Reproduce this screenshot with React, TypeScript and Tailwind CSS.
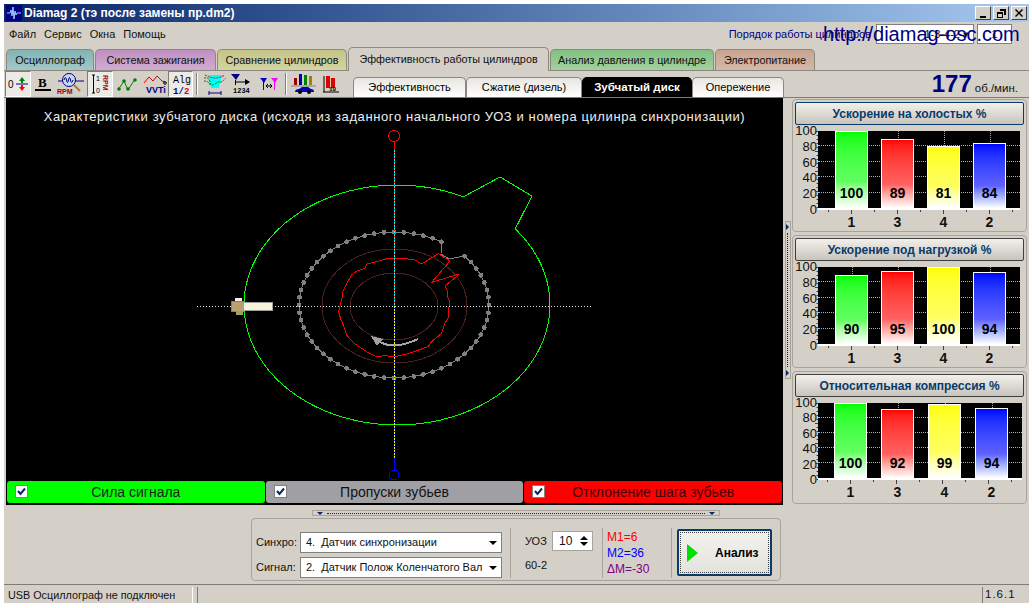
const rawRed = [
  [605, 312], [640, 290], [655, 281], [690, 303], [635, 367], [718, 342], [675, 378], [682, 392], [682, 410],
  [690, 425], [686, 445], [686, 470], [675, 490], [665, 520], [635, 545], [625, 560], [590, 572], [560, 582],
  [525, 590], [495, 587], [470, 590], [445, 578], [425, 565], [400, 548], [380, 525], [372, 500], [363, 480],
  [356, 455], [362, 430], [368, 405], [368, 395], [380, 370], [395, 345], [410, 333], [435, 325], [440, 312],
  [470, 305], [500, 296], [550, 295], [585, 300], [605, 312],
];
const redLine = rawRed.map(([x, y]) => `${220 + x / 3},${160 + y / 3}`).join(" ");

const teeth = Array.from({ length: 58 }, (_, i) => {
  const t = ((-42 + i * 6) * Math.PI) / 180;
  return [394 + 95 * Math.cos(t), 305 + 73 * Math.sin(t)];
});
const teethLine = teeth.map(([x, y]) => `${x},${y}`).join(" ");

// disc outline, runs clockwise from the notch
const discLine = Array.from({ length: 84 }, (_, i) => {
  const t = ((-39.4 + (i * 335.1) / 83) * Math.PI) / 180;
  return `${397 + 153 * Math.cos(t)},${305 + 120 * Math.sin(t)}`;
}).join(" ");

const Disc = () => (
  <svg viewBox="7 98 775 383" className="absolute inset-0 h-full w-full" shapeRendering="crispEdges">
    <polygon points={`${discLine} 500,177 532,196`} fill="none" stroke="#00ff00" strokeWidth="1" />
    <ellipse cx="394.5" cy="306" rx="72.5" ry="57" fill="none" stroke="#4a2020" />
    <ellipse cx="394" cy="306.5" rx="44" ry="33.5" fill="none" stroke="#4a2020" />
    <polyline points={`${teethLine} 441,254 449,259 464,256`} fill="none" stroke="#808080" strokeWidth="1" />
    {teeth.map(([x, y], i) => (
      <circle key={i} cx={x} cy={y} r="2.4" fill="#808080" />
    ))}
    <polyline points={redLine} fill="none" stroke="#ff0000" strokeWidth="1" />
    <line x1="197" y1="306.5" x2="592" y2="306.5" stroke="#e8e8e8" strokeDasharray="1 2" />
    <circle cx="394" cy="136" r="5.5" fill="none" stroke="#ff0000" />
    <line x1="394.5" y1="141" x2="394.5" y2="150" stroke="#ff0000" />
    <line x1="394.5" y1="150" x2="394.5" y2="306" stroke="#ff0000" />
    <line x1="394.5" y1="150" x2="394.5" y2="306" stroke="#00ffff" strokeDasharray="2 1" />
    <line x1="394.5" y1="306" x2="394.5" y2="459" stroke="#0000ff" />
    <line x1="394.5" y1="306" x2="394.5" y2="459" stroke="#ffff00" strokeDasharray="2 1" />
    <line x1="394.5" y1="459" x2="394.5" y2="470" stroke="#0000ff" />
    <circle cx="394" cy="475" r="5" fill="none" stroke="#0000ff" />
    <path d="M418 339 Q395 350 380 342" fill="none" stroke="#a8a8a8" strokeWidth="2" />
    <polygon points="371,336 383,339 377,346" fill="#a0a0a0" />
    <rect x="235" y="298" width="7" height="3" fill="#f0f0f0" />
    <rect x="231" y="301" width="12" height="10" fill="#b8a070" stroke="#808080" />
    <rect x="236" y="311" width="7" height="4" fill="#a89868" />
    <rect x="243" y="302.5" width="29" height="8" fill="#f8f4dc" stroke="#a0a0a0" />
  </svg>
);

const topTabs = [
  { label: "Осциллограф", cls: "w-[88px] bg-gradient-to-b from-[#80b4b4] to-[#a4c8c8]" },
  { label: "Система зажигания", cls: "w-[121px] bg-gradient-to-b from-[#c090c0] to-[#d0acd0]" },
  { label: "Сравнение цилиндров", cls: "w-[130px] bg-gradient-to-b from-[#c4c488] to-[#d4d4a4]" },
];
const topTabs2 = [
  { label: "Анализ давления в цилиндре", cls: "w-[164px] bg-gradient-to-b from-[#80c080] to-[#a4d0a0]" },
  { label: "Электропитание", cls: "w-[100px] bg-gradient-to-b from-[#c8a490] to-[#d4b8a8]" },
];

const Tab = ({ label, cls }: { label: string; cls: string }) => (
  <div className={`flex h-[21px] items-center justify-center rounded-t-[5px] border border-b-0 border-[#8c8880] text-[10.8px] text-[#111] ${cls}`}>
    {label}
  </div>
);

const SubTab = ({ label, cls, on }: { label: string; cls: string; on?: boolean }) => (
  <div
    className={`flex h-[20px] items-center justify-center rounded-t-[5px] border border-b-0 ${cls} ${
      on ? "border-black bg-black text-[11.5px] font-bold text-white" : "border-[#8c8880] bg-gradient-to-b from-[#e8e6e0] to-white text-[11px] text-black"
    }`}
  >
    {label}
  </div>
);

const ToolBtn = ({ children, w, on }: { children: React.ReactNode; w: string; on?: boolean }) => (
  <div
    className={`flex h-[26px] items-center justify-center ${w} ${
      on ? "border border-t-[#807c74] border-l-[#807c74] border-r-white border-b-white bg-[#eceae6]" : ""
    }`}
  >
    {children}
  </div>
);

const Toolbar = () => (
  <div className="flex w-[349px] items-center pl-[1px]">
    <ToolBtn w="w-[26px]" on>
      <svg width="22" height="18" viewBox="0 0 22 18">
        <text x="1" y="13" fontSize="10" fontFamily="Liberation Sans" fill="#000">0</text>
        <path d="M9 9h12" stroke="#000080" />
        <path d="M15 2l3 4h-2v2h-2v-2h-2z" fill="#008000" />
        <path d="M15 16l3-4h-2v-2h-2v2h-2z" fill="#ff0000" />
      </svg>
    </ToolBtn>
    <ToolBtn w="w-[24px]">
      <svg width="18" height="18" viewBox="0 0 18 18">
        <text x="4" y="12" fontSize="13" fontWeight="bold" fontFamily="Liberation Serif" fill="#000">B</text>
        <rect x="1" y="14" width="16" height="2" fill="#000" />
      </svg>
    </ToolBtn>
    <ToolBtn w="w-[32px]">
      <svg width="28" height="24" viewBox="0 0 28 24">
        <path d="M1 9h26" stroke="#000080" />
        <circle cx="12" cy="8" r="6.5" fill="#c8d8f0" stroke="#000080" />
        <path d="M7 8q1.500-5 2.500 0t2 0 2 0 2.500 0" fill="none" stroke="#000080" />
        <path d="M17 13l6 6" stroke="#a08040" strokeWidth="2" />
        <text x="0" y="22" fontSize="7" fontWeight="bold" fontFamily="Liberation Sans" fill="#a00000">RPM</text>
      </svg>
    </ToolBtn>
    <ToolBtn w="w-[26px]" on>
      <svg width="22" height="22" viewBox="0 0 22 22">
        <path d="M3 2h3M4.500 2v18M3 20h3" stroke="#000" fill="none" />
        <text x="7" y="8" fontSize="7" fontFamily="Liberation Sans" fill="#000">1</text>
        <text x="7" y="20" fontSize="7" fontFamily="Liberation Sans" fill="#000">0</text>
        <text x="0" y="0" fontSize="7" fontWeight="bold" fontFamily="Liberation Sans" fill="#a00000" transform="translate(14 2) rotate(90)">RPM</text>
      </svg>
    </ToolBtn>
    <ToolBtn w="w-[28px]">
      <svg width="22" height="18" viewBox="0 0 22 18">
        <path d="M2 15L8 6l4 9 7-11" fill="none" stroke="#008000" />
        <circle cx="3" cy="14" r="1.800" fill="#008000" />
        <circle cx="8" cy="6" r="1.800" fill="#008000" />
        <circle cx="12" cy="14" r="1.800" fill="#008000" />
        <circle cx="19" cy="5" r="1.800" fill="#008000" />
      </svg>
    </ToolBtn>
    <ToolBtn w="w-[27px]">
      <svg width="24" height="22" viewBox="0 0 24 22">
        <path d="M1 10L6 4l4 4 4-5 5 5 3 1" fill="none" stroke="#e00000" />
        <circle cx="22" cy="10" r="1.300" fill="none" stroke="#000" />
        <text x="3" y="20" fontSize="9" fontWeight="bold" fontFamily="Liberation Sans" fill="#000080">VVTi</text>
      </svg>
    </ToolBtn>
    <ToolBtn w="w-[25px]" on>
      <svg width="20" height="24" viewBox="0 0 20 24">
        <text x="2" y="11" fontSize="10" fontFamily="Liberation Mono" fill="#000">Alg</text>
        <text x="2" y="22" fontSize="9" fontWeight="bold" fontFamily="Liberation Mono" fill="#000080">1/</text>
        <text x="13" y="22" fontSize="9" fontWeight="bold" fontFamily="Liberation Mono" fill="#e00000">2</text>
      </svg>
    </ToolBtn>
    <div className="mx-[3px] h-[22px] w-[2px] border-x border-l-[#807c74] border-r-white" />
    <ToolBtn w="w-[27px]">
      <svg width="24" height="24" viewBox="0 0 24 24">
        <path d="M5 3h14l-3 13H8z" fill="#00ffff" />
        <path d="M1 6q5-1 6 4t5 2 5-2 6-4M1 9q5 0 6 4" fill="none" stroke="#008000" strokeDasharray="2 1" />
        <path d="M2 3q5 3 10 3t10-3" fill="none" stroke="#e00000" strokeDasharray="2 1" />
        <path d="M6 21h12M6 19v4M18 19v4" stroke="#000080" />
      </svg>
    </ToolBtn>
    <ToolBtn w="w-[28px]">
      <svg width="24" height="24" viewBox="0 0 24 24">
        <path d="M1 2h9l-4 6z" fill="#000080" />
        <path d="M5.500 8v5M5 10h14" stroke="#000" />
        <path d="M15 7l5 3-5 3z" fill="#000" />
        <text x="3" y="21" fontSize="7" fontWeight="bold" fontFamily="Liberation Mono" fill="#000">1234</text>
      </svg>
    </ToolBtn>
    <ToolBtn w="w-[26px]">
      <svg width="20" height="18" viewBox="0 0 20 18">
        <path d="M1 3h7l-3 5z" fill="#0000c0" />
        <path d="M4.500 6v9" stroke="#0000c0" />
        <path d="M12 3h7l-3 5z" fill="#ff00ff" />
        <path d="M15.500 6v9" stroke="#ff00ff" />
        <path d="M7 11h6M7 11l2-2M7 11l2 2M13 11l-2-2M13 11l-2 2" stroke="#000" fill="none" />
      </svg>
    </ToolBtn>
    <div className="mx-[3px] h-[22px] w-[2px] border-x border-l-[#807c74] border-r-white" />
    <ToolBtn w="w-[28px]">
      <svg width="26" height="22" viewBox="0 0 26 22">
        <rect x="3" y="5" width="3" height="7" fill="#a00000" />
        <rect x="8" y="1" width="3" height="11" fill="#0000a0" />
        <rect x="13" y="2" width="3" height="10" fill="#008000" />
        <rect x="18" y="3" width="3" height="9" fill="#a08000" />
        <path d="M0 13h25" stroke="#808080" />
        <path d="M4 19q0-3 4-3l3-2h6l3 2q3 0 3 3z" fill="#0000c0" />
        <circle cx="9" cy="19" r="2" fill="#000" />
        <circle cx="18" cy="19" r="2" fill="#000" />
      </svg>
    </ToolBtn>
    <ToolBtn w="w-[26px]">
      <svg width="18" height="20" viewBox="0 0 18 20">
        <path d="M2 2v16M1 18h16" stroke="#000" />
        <rect x="4" y="2" width="4" height="12" fill="#e00000" />
        <rect x="9" y="4" width="4" height="10" fill="#e00000" />
        <text x="7" y="17" fontSize="6" fontWeight="bold" fontFamily="Liberation Mono" fill="#000">10</text>
      </svg>
    </ToolBtn>
  </div>
);

const Check = () => (
  <span className="flex h-[13px] w-[13px] items-center justify-center border border-[#808080] bg-white">
    <svg width="9" height="9" viewBox="0 0 9 9">
      <path d="M1 4l2.500 3L8 1.500" fill="none" stroke="#0a246a" strokeWidth="2" />
    </svg>
  </span>
);

const CheckBar = ({ label, cls }: { label: string; cls: string }) => (
  <div className={`relative flex h-[22px] flex-1 items-center justify-center rounded-[3px] text-[14px] ${cls}`}>
    <span className="absolute left-[8px] top-[4px]">
      <Check />
    </span>
    {label}
  </div>
);

const colors = [
  "from-[#00ff00] via-[#60ff60] via-65% to-white",
  "from-[#ff0000] via-[#ff6060] via-65% to-white",
  "from-[#ffff00] via-[#ffff60] via-65% to-white",
  "from-[#0000ff] via-[#6060ff] via-65% to-white",
];

const Chart = ({ vals, axis, wrap, h, lh, ticks }: { vals: number[]; axis: string; wrap: string; h: string; lh: string; ticks: number }) => (
  <div className="mt-[6px] flex">
    <div className={`flex w-[22px] flex-col justify-between text-right text-[13px] leading-[14px] text-[#111] -my-[7px] ${lh}`}>
      {[100, 80, 60, 40, 20, 0].map((n) => (
        <span key={n}>{n}</span>
      ))}
    </div>
    <div className={`relative ml-[1px] flex flex-col ${axis}`}>
      <svg className="absolute -left-[3px] top-0" width="3" height="78">
        {Array.from({ length: 20 }, (_, i) => (
          <path key={i} d={`M${i % 5 === 0 ? 0 : 1.5} ${i * 4 + 0.5}H3`} stroke="#404040" />
        ))}
      </svg>
      <div className={`relative flex items-end border-b-2 border-white bg-black ${wrap} ${h}`}>
        {[20, 40, 60, 80].map((n) => (
          <div key={n} className="absolute inset-x-0 border-t border-dotted border-[#b0b0b0]" style={{ bottom: `${n}%` }} />
        ))}
        {vals.map((v, i) => (
          <div key={i} className="relative flex h-full w-[33px] items-end">
            <div className="absolute inset-y-0 left-1/2 border-l border-dotted border-[#b0b0b0]" />
            <div className={`relative w-full border border-b-0 border-white bg-gradient-to-b ${colors[i]}`} style={{ height: `${v}%` }}>
              <span className="absolute bottom-[8px] left-0 right-0 text-center text-[14px] font-bold leading-[14px] text-black">{v}</span>
            </div>
          </div>
        ))}
      </div>
      <svg className="block" width="204" height="4">
        {Array.from({ length: 9 }, (_, i) => (
          <path key={i} d={`M${ticks + i * 23 + 0.5} 0v${i % 2 ? 4 : 2}`} stroke="#404040" />
        ))}
      </svg>
      <div className={`flex ${wrap}`}>
        {["1", "3", "4", "2"].map((n) => (
          <span key={n} className="w-[33px] text-center text-[14px] font-bold leading-[16px] text-[#111]">
            {n}
          </span>
        ))}
      </div>
    </div>
  </div>
);

const Panel = ({
  title,
  focus,
  vals,
  axis,
  wrap,
  h,
  lh,
  ticks,
}: {
  title: string;
  focus?: boolean;
  vals: number[];
  axis: string;
  wrap: string;
  h: string;
  lh: string;
  ticks: number;
}) => (
  <div className="h-[133px] rounded-[4px] border border-[#a8a49c] px-[2px] pt-[2px]">
    <div
      className={`flex h-[23px] items-center justify-center rounded-[2px] border bg-gradient-to-b from-[#f2f0ec] to-[#c8c4bc] text-[12px] font-bold text-[#0a3a6a] ${
        focus ? "border-[#0a3a6a]" : "border-[#404040]"
      }`}
    >
      {title}
    </div>
    <Chart vals={vals} axis={axis} wrap={wrap} h={h} lh={lh} ticks={ticks} />
  </div>
);

export default function App() {
  return (
    <div className="h-[608px] w-[1032px] overflow-hidden bg-white pl-[4px] pr-[3px] pt-[4px] pb-[5px] font-['Liberation_Sans',sans-serif] text-[#111]">
      <div className="relative flex h-full flex-col bg-[#d4d0c8]">
        {/* title */}
        <div className="flex h-[18px] items-center bg-gradient-to-r from-[#0a246a] to-[#a6caf0] pl-[2px] pr-[2px]">
          <svg width="16" height="16" viewBox="0 0 16 16">
            <rect width="16" height="16" fill="#000080" />
            <path d="M1 8h3l1-3 1 6 1-9 1 12 1-8 1 4 1-2h4" fill="none" stroke="#a0d0ff" />
          </svg>
          <span className="ml-[2px] text-[12px] font-bold text-white">Diamag 2 (тэ после замены пр.dm2)</span>
          <div className="ml-auto flex gap-[2px]">
            {["M3 9h6v2H3z", "M5 2h6v6H9V4H5zM2 5h6v6H2zM3 7v3h4V7z", "M3 2l3 3 3-3 1 1-3 3 3 3-1 1-3-3-3 3-1-1 3-3-3-3z"].map((d) => (
              <span
                key={d}
                className="flex h-[14px] w-[16px] items-center justify-center border border-b-[#404040] border-l-white border-r-[#404040] border-t-white bg-[#d4d0c8]"
              >
                <svg width="12" height="12" viewBox="0 0 12 12">
                  <path d={d} fill="#000" fillRule="evenodd" />
                </svg>
              </span>
            ))}
          </div>
        </div>
        {/* menu */}
        <div className="flex h-[24px] items-center gap-[8px] pl-[5px] text-[11px]">
          <span>Файл</span>
          <span>Сервис</span>
          <span>Окна</span>
          <span>Помощь</span>
          <div className="ml-auto flex items-center pr-[17px]">
            <span className="mr-[5px] text-[#000080]">Порядок работы цилиндров</span>
            <span className="flex h-[20px] w-[98px] items-center justify-end border border-[#808080] bg-white pr-[4px]">1-3-4-2 ▾</span>
            <span className="ml-[3px] flex h-[20px] w-[35px] items-center justify-center border border-[#808080] bg-white">1</span>
          </div>
        </div>
        <div className="pointer-events-none absolute left-[819px] top-[17px] whitespace-nowrap text-[20px] leading-[26px] text-[#000080]">http://diamag-osc.com</div>
        {/* top tabs */}
        <div className="flex h-[25px] items-end gap-[1px] border-b border-[#8c8880] pl-[2px]">
          {topTabs.map((t) => (
            <Tab key={t.label} label={t.label} cls={t.cls} />
          ))}
          <div className="-mb-[1px] flex h-[24px] w-[201px] items-center justify-center rounded-t-[5px] border border-b-0 border-[#8c8880] bg-[#d4d0c8] text-[10.8px]">
            Эффективность работы цилиндров
          </div>
          {topTabs2.map((t) => (
            <Tab key={t.label} label={t.label} cls={t.cls} />
          ))}
        </div>
        {/* toolbar and subtabs */}
        <div className="flex h-[26px] items-end">
          <Toolbar />
          <div className="flex items-end">
            <SubTab label="Эффективность" cls="w-[113px]" />
            <SubTab label="Сжатие (дизель)" cls="w-[116px]" />
            <SubTab label="Зубчатый диск" cls="w-[110px]" on />
            <SubTab label="Опережение" cls="w-[92px]" />
          </div>
          <div className="ml-auto flex items-baseline pr-[11px]">
            <span className="text-[24px] font-bold leading-[27px] text-[#000080]">177</span>
            <span className="ml-[3px] text-[11.5px] text-[#111]">об./мин.</span>
          </div>
        </div>
        {/* main */}
        <div className="flex flex-1 border-t border-[#807c74]">
          <div className="flex w-[779px] flex-col pl-[2px]">
            <div className="flex h-[407px] flex-col bg-black px-[1px] pb-[2px]">
              <div className="relative flex-1">
                <Disc />
                <div className="absolute left-0 right-0 top-[9px] text-center text-[13px] tracking-[0.6px] text-[#eee]">
                  Характеристики зубчатого диска (исходя из заданного начального УОЗ и номера цилинра синхронизации)
                </div>
              </div>
              <div className="flex gap-[1px]">
                <CheckBar label="Сила сигнала" cls="bg-[#00ff00] text-[#222]" />
                <CheckBar label="Пропуски зубьев" cls="bg-[#a0a0a4] text-[#111]" />
                <CheckBar label="Отклонение шага зубьев" cls="bg-[#ff0000] text-[#400]" />
              </div>
            </div>
            <div className="ml-[306px] mt-[5px] flex h-[6px] w-[408px] items-center justify-between border border-[#a8a49c] px-[4px]">
              <span className="h-0 w-0 border-x-[3px] border-t-[3px] border-x-transparent border-t-[#0a246a]" />
              <span className="mx-[4px] flex-1 border-t border-dotted border-[#0a246a]" />
              <span className="h-0 w-0 border-x-[3px] border-t-[3px] border-x-transparent border-t-[#0a246a]" />
            </div>
            {/* bottom panel */}
            <div className="ml-[245px] mt-[2px] flex h-[63px] w-[530px] items-center rounded-[4px] border border-[#a8a49c] pl-[4px] text-[11px]">
              <div className="flex w-[254px] flex-col gap-[4px] pt-[11px]">
                <div className="flex items-center">
                  <span className="w-[44px]">Синхро:</span>
                  <div className="flex h-[21px] w-[202px] items-center justify-between border border-[#808080] bg-white pl-[5px] pr-[4px]">
                    <span>4.&nbsp; Датчик синхронизации</span>
                    <span className="h-0 w-0 border-x-[4px] border-t-[4px] border-x-transparent border-t-black" />
                  </div>
                </div>
                <div className="flex items-center">
                  <span className="w-[44px]">Сигнал:</span>
                  <div className="flex h-[21px] w-[202px] items-center justify-between border border-[#808080] bg-white pl-[5px] pr-[4px]">
                    <span className="whitespace-nowrap">2.&nbsp; Датчик Полож Коленчатого Вал</span>
                    <span className="h-0 w-0 border-x-[4px] border-t-[4px] border-x-transparent border-t-black" />
                  </div>
                </div>
              </div>
              <div className="mt-[6px] h-[50px] w-px bg-[#a8a49c]" />
              <div className="flex w-[91px] flex-col pl-[14px] pt-[6px]">
                <div className="flex items-center">
                  <span className="w-[27px]">УОЗ</span>
                  <div className="flex h-[20px] w-[41px] items-center justify-between border border-[#a8a49c] bg-white pl-[6px] pr-[4px] text-[12px]">
                    10
                    <span className="flex flex-col gap-[2px]">
                      <span className="h-0 w-0 border-x-[4px] border-b-[4px] border-x-transparent border-b-black" />
                      <span className="h-0 w-0 border-x-[4px] border-t-[4px] border-x-transparent border-t-black" />
                    </span>
                  </div>
                </div>
                <span className="mt-[6px]">60-2</span>
              </div>
              <div className="mt-[6px] h-[50px] w-px bg-[#a8a49c]" />
              <div className="flex w-[68px] flex-col pl-[4px] pt-[6px] text-[12px] leading-[16px]">
                <span className="text-[#ff0000]">M1=6</span>
                <span className="text-[#0000ff]">M2=36</span>
                <span className="text-[#800080]">ΔM=-30</span>
              </div>
              <div className="mt-[6px] h-[50px] w-px bg-[#a8a49c]" />
              <div className="ml-[5px] mt-[6px] flex h-[47px] w-[95px] items-center rounded-[2px] border-2 border-[#0a3a6a] bg-gradient-to-b from-[#f4f2ee] to-[#e4e2dc] pl-[8px] outline-dotted outline-1 -outline-offset-4 outline-[#404040]">
                <svg width="11" height="18" viewBox="0 0 11 18">
                  <polygon points="0,0 11,9 0,18" fill="#00e000" />
                </svg>
                <span className="ml-[17px] text-[12px] font-bold text-black">Анализ</span>
              </div>
            </div>
          </div>
          {/* splitter */}
          <div className="flex w-[9px] flex-col items-center pt-[123px]">
            <div className="flex h-[158px] w-[6px] flex-col items-center justify-between border border-[#a8a49c] py-[2px]">
              <span className="h-0 w-0 border-y-[3px] border-l-[3px] border-y-transparent border-l-[#0a246a]" />
              <span className="my-[3px] flex-1 border-l border-dotted border-[#0a246a]" />
              <span className="h-0 w-0 border-y-[3px] border-l-[3px] border-y-transparent border-l-[#0a246a]" />
            </div>
          </div>
          {/* right panels */}
          <div className="flex w-[235px] flex-col gap-[3px] pt-[1px]">
            <Panel title="Ускорение на холостых %" focus vals={[100, 89, 81, 84]} axis="w-[202px]" wrap="gap-[13px] pl-[17px]" h="h-[79px]" lh="h-[93px]" ticks={10} />
            <Panel title="Ускорение под нагрузкой %" vals={[90, 95, 100, 94]} axis="w-[202px]" wrap="gap-[13px] pl-[17px]" h="h-[79px]" lh="h-[93px]" ticks={10} />
            <Panel title="Относительная компрессия %" vals={[100, 92, 99, 94]} axis="w-[204px]" wrap="gap-[14px] pl-[16px]" h="h-[77px]" lh="h-[91px]" ticks={9} />
          </div>
        </div>
        {/* status */}
        <div className="flex h-[19px] gap-[4px] border-t border-[#807c74] pt-[2px] text-[10.8px]">
          <div className="flex w-[189px] items-center border-r border-white pl-[4px]">USB Осциллограф не подключен</div>
          <div className="flex-1 border-l border-[#807c74]" />
          <div className="flex w-[47px] items-center border-l border-[#807c74] pl-[2px] text-[11.5px] tracking-[1px]">1.6.1</div>
        </div>
      </div>
    </div>
  );
}
